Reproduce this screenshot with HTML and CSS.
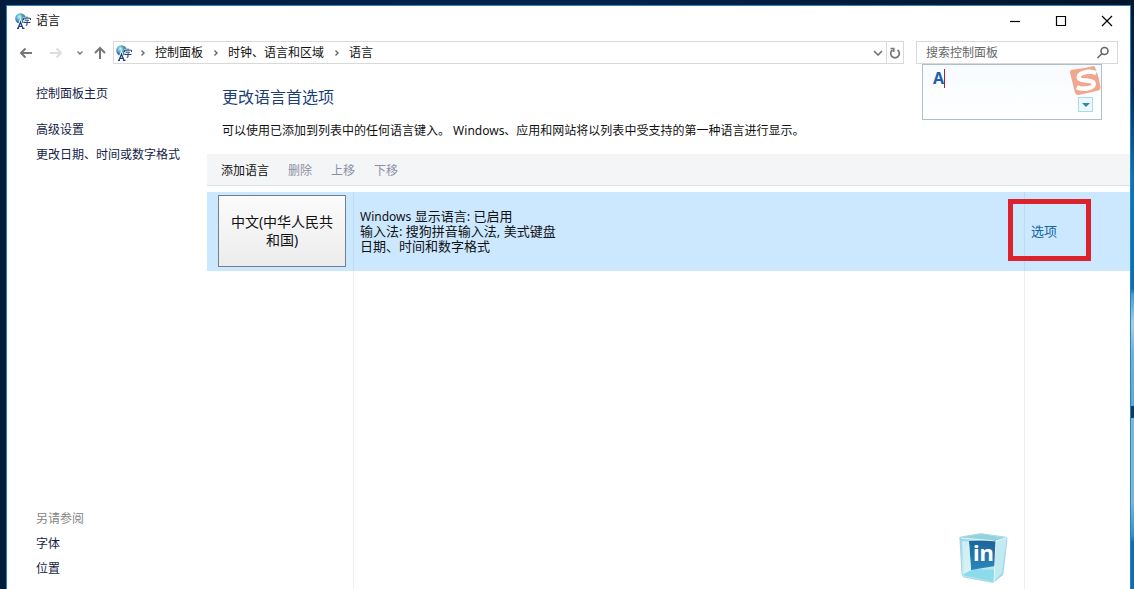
FILE: index.html
```html
<!DOCTYPE html>
<html lang="zh-CN">
<head>
<meta charset="utf-8">
<title>语言</title>
<link rel="stylesheet" href="styles.css">
</head>
<body>
<svg class="defs" aria-hidden="true">
  <defs>
    <radialGradient id="globe" cx="40%" cy="35%" r="65%">
      <stop offset="0" stop-color="#d4f5f6"/><stop offset=".45" stop-color="#58b0cf"/><stop offset="1" stop-color="#1d5188"/>
    </radialGradient>
    <symbol id="lang" viewBox="0 0 16 16">
      <circle cx="5.500" cy="5.500" r="5.300" fill="url(#globe)"/>
      <path d="M6 1Q9 1 10.500 4L8 4.500Z" fill="#4d9a72" opacity=".7"/>
      <path d="M8 4h8v7H8z" fill="#fff" opacity=".7"/>
      <path d="M12 3.500v1.500M8.500 7V5.200h7V7M10 7.200h3.500L12 8.700v3.500h-1.300M8.500 9.500h7" fill="none" stroke="#203f7b"/>
      <path d="M3 15.500L5.500 9l2.500 6.500" fill="none" stroke="#fff" stroke-width="3"/>
      <path d="M3 15.500L5.500 9l2.500 6.500M4 13.300h3M2 15.400h2M7 15.400h2.500" fill="none" stroke="#1e4384" stroke-width="1.300"/>
    </symbol>
    <symbol id="chev" viewBox="0 0 6 8"><path d="M1.500 1.500L4 4 1.500 6.500" fill="none" stroke="#666" stroke-width="1.400"/></symbol>
  </defs>
</svg>
<div class="window">
  <header class="titlebar">
    <svg class="app-icon"><use href="#lang"/></svg>
    <span class="title">语言</span>
    <button class="caption" aria-label="最小化"><svg viewBox="0 0 12 12"><path d="M1 6.500h10"/></svg></button>
    <button class="caption" aria-label="最大化"><svg viewBox="0 0 12 12"><path d="M1.500 1.500h9v9h-9z"/></svg></button>
    <button class="caption" aria-label="关闭"><svg viewBox="0 0 12 12"><path d="M1 1l10 10M11 1L1 11"/></svg></button>
  </header>
  <nav class="navbar">
    <button class="nav-btn back" aria-label="后退"><svg viewBox="0 0 14 14"><path d="M13 7H2M6.500 2.500L2 7l4.500 4.500"/></svg></button>
    <button class="nav-btn forward" aria-label="前进"><svg viewBox="0 0 14 14"><path d="M1 7h11M7.500 2.500L12 7l-4.500 4.500"/></svg></button>
    <button class="nav-btn recent" aria-label="最近位置"><svg viewBox="0 0 8 8"><path d="M1.500 2.500L4 5l2.500-2.500"/></svg></button>
    <button class="nav-btn up" aria-label="上移一级"><svg viewBox="0 0 14 14"><path d="M7 13V2M2 7l5-5 5 5"/></svg></button>
    <div class="address">
      <svg class="addr-icon"><use href="#lang"/></svg>
      <svg class="chev"><use href="#chev"/></svg>
      <a href="#">控制面板</a>
      <svg class="chev"><use href="#chev"/></svg>
      <a href="#">时钟、语言和区域</a>
      <svg class="chev"><use href="#chev"/></svg>
      <a href="#">语言</a>
      <button class="addr-btn drop" aria-label="历史记录"><svg viewBox="0 0 12 12"><path d="M2 4l4 4 4-4"/></svg></button>
      <button class="addr-btn refresh" aria-label="刷新"><svg viewBox="0 0 12 12"><path d="M3.500 3A4.300 4.300 0 1 0 8.500 3"/><path d="M1.500 1.500h3.200v3.500"/></svg></button>
    </div>
    <div class="search">
      <input type="text" placeholder="搜索控制面板" aria-label="搜索控制面板">
      <svg class="glass" viewBox="0 0 14 14"><circle cx="8.500" cy="5" r="3.500"/><path d="M6 7.500L1.500 12"/></svg>
      <div class="ime">
        <span class="typed">A</span>
        <svg class="sogou" viewBox="0 0 32 32">
          <path d="M2 5Q14 4 24 1q2 0 2.500 3 4 10 5 19 0 3-3 3.500L9 31q-3 0-4-3Q2 16 0 8 0 5 2 5z" fill="#f1a78e"/>
          <path d="M27 8.500C20 5 8.500 8 9 13c.500 4.500 15 1.500 15.500 6 .500 5-11 7-17.500 4" fill="none" stroke="#fff" stroke-width="4.500"/>
        </svg>
        <button class="ime-menu" aria-label="输入法菜单"><svg viewBox="0 0 8 4"><path d="M0 0h8L4 4z"/></svg></button>
      </div>
    </div>
  </nav>
  <div class="content">
    <aside class="sidebar">
      <a class="home" href="#">控制面板主页</a>
      <a href="#">高级设置</a>
      <a href="#">更改日期、时间或数字格式</a>
      <div class="see-also">
        <span class="muted">另请参阅</span>
        <a href="#">字体</a>
        <a href="#">位置</a>
      </div>
    </aside>
    <main class="main">
      <h1>更改语言首选项</h1>
      <p class="desc">可以使用已添加到列表中的任何语言键入。 Windows、应用和网站将以列表中受支持的第一种语言进行显示。</p>
      <div class="toolbar">
        <button>添加语言</button>
        <button disabled>删除</button>
        <button disabled>上移</button>
        <button disabled>下移</button>
      </div>
      <div class="list">
        <div class="row">
          <div class="cell name"><button class="tile">中文(中华人民共和国)</button></div>
          <div class="cell info"><span class="latin">Windows</span> 显示语言: 已启用<br>输入法: 搜狗拼音输入法, 美式键盘<br>日期、时间和数字格式</div>
          <div class="cell options"><a href="#">选项</a><span class="highlight"></span></div>
        </div>
        <div class="row filler"><div class="cell name"></div><div class="cell info"></div><div class="cell options"></div></div>
      </div>
      <svg class="cube" viewBox="0 0 50 50">
        <defs>
          <linearGradient id="ice" x1="0" y1="0" x2="1" y2="1"><stop offset="0" stop-color="#8ed2e2"/><stop offset=".5" stop-color="#d7f2f7"/><stop offset="1" stop-color="#79cfe2"/></linearGradient>
          <linearGradient id="blue" x1="0" y1="0" x2="0" y2="1"><stop offset="0" stop-color="#1b6499"/><stop offset="1" stop-color="#2b86ba"/></linearGradient>
        </defs>
        <path d="M2 6Q1 4 3 4L21 1q2-.500 4 0l22 3q2 0 2 2l-4 34q0 2-2 3l-6 5q-2 2-4 1L6 44q-2-1-2-3z" fill="url(#ice)" stroke="#a4d6e2"/>
        <path d="M3 5l34 3 11-3L23 1z" fill="#93d2df"/>
        <path d="M38 8l10-3-4 35-8 8z" fill="#c3eaf1"/>
        <path d="M5 41l11-5 20 1v11L6 43z" fill="#8cdbea"/>
        <path d="M11 8l27-1-1 26-24 4z" fill="url(#blue)"/>
        <path d="M3 5l35 3-2 41M38 8l10-3" fill="none" stroke="#e3f6fa"/>
        <path d="M4 8l7 1 2 27-7 5z" fill="#d9f2f6" opacity=".8"/>
        <text x="15" y="28">in</text>
      </svg>
    </main>
  </div>
</div>
</body>
</html>
```
FILE: styles.css
```css
* { box-sizing: border-box; }
body {
  margin: 0;
  height: 100vh;
  padding: 5px 3px 0 6px;
  display: flex;
  font: 12px/16px "Noto Sans", "Noto Sans CJK SC", sans-serif;
  color: #111;
  background:
    linear-gradient(#02182f 0, #032a55 15%, #0b74b8 30%, #0a6fb4 49%, #3e9fd0 50%, #a9cfe6 55%, #6fb2d9 60%, #5ea8d3 69%, #083c66 69%, #083c66 71%, #7ab8db 71%, #7ab8db 85%, #2f90c8 91%, #0a6fb4 92%) right / 4px 100% no-repeat,
    linear-gradient(90deg, #021c3c, #03234c 50%, #021428);
}
a { color: inherit; text-decoration: none; }
button { font: inherit; color: inherit; border: 0; padding: 0; background: none; display: flex; align-items: center; justify-content: center; }
.defs { position: absolute; width: 0; height: 0; }
.window {
  flex: 1;
  display: flex;
  flex-direction: column;
  background: #fff;
  border: 1px solid #2a83ba;
  border-bottom: 0;
}
.titlebar { height: 30px; display: flex; align-items: center; padding-left: 8px; }
.app-icon, .addr-icon { width: 16px; height: 16px; flex: none; }
.title { flex: 1; padding-left: 5px; }
.caption { width: 46px; height: 28px; }
.caption svg { width: 12px; height: 12px; fill: none; stroke: #000; stroke-width: 1.2; }
.navbar { display: flex; align-items: center; padding: 5px 12px 0 12px; }
.nav-btn svg { width: 14px; height: 14px; fill: none; stroke: #777; stroke-width: 2; }
.forward { margin-left: 16px; }
.forward svg { stroke: #ddd; }
.recent { margin-left: 13px; }
.recent svg { width: 8px; height: 8px; stroke-width: 1.4; }
.up { margin: 0 6px 0 9px; }
.address {
  flex: 1;
  height: 23px;
  display: flex;
  align-items: center;
  border: 1px solid #d9d9d9;
  padding-left: 2px;
}
.chev { width: 6px; height: 8px; margin: 0 9px 0 10px; flex: none; }
.addr-icon + .chev { margin-left: 8px; }
.addr-btn { align-self: stretch; width: 17px; }
.addr-btn svg { width: 12px; height: 12px; fill: none; stroke: #777; stroke-width: 1.7; }
.drop { margin-left: auto; }
.refresh { border-left: 1px solid #d9d9d9; }
.search {
  position: relative;
  width: 202px;
  height: 23px;
  margin-left: 12px;
  display: flex;
  align-items: center;
  border: 1px solid #d9d9d9;
  padding: 0 7px 0 9px;
}
.search input { flex: 1; min-width: 0; border: 0; outline: 0; padding: 0; font: inherit; background: none; }
.search input::placeholder { color: #666; opacity: 1; }
.glass { width: 14px; height: 14px; fill: none; stroke: #666; stroke-width: 1.6; }
.ime {
  position: absolute;
  left: 5px;
  top: 22px;
  width: 180px;
  height: 56px;
  border: 1px solid #aebfca;
  background: linear-gradient(#f7fbfe, #fff);
}
.typed {
  position: absolute;
  left: 10px;
  top: 4px;
  font: bold 16px/19px "Noto Sans", sans-serif;
  color: #1f5fa8;
  border-right: 1px solid #b3202c;
}
.sogou { position: absolute; right: 0; top: 0; width: 31px; height: 31px; }
.ime-menu { position: absolute; right: 8px; top: 32px; width: 15px; height: 15px; border: 1px solid #a9dbe8; background: #ecf8fc; }
.ime-menu svg { width: 8px; height: 4px; fill: #318aa3; }
.content { flex: 1; display: flex; min-height: 0; }
.sidebar {
  width: 200px;
  padding: 22px 0 12px 29px;
  display: flex;
  flex-direction: column;
  gap: 9px;
  color: #151c48;
}
.home { margin-bottom: 11px; }
.see-also { margin-top: auto; display: flex; flex-direction: column; gap: 9px; }
.muted { color: #858585; }
.main { flex: 1; min-width: 0; display: flex; flex-direction: column; position: relative; }
h1 { margin: 22px 15px 0; font-weight: 400; font-size: 16px; line-height: 22px; color: #1c3f78; }
.desc { margin: 15px 15px 15px; }
.toolbar {
  height: 32px;
  display: flex;
  align-items: center;
  gap: 19px;
  padding: 2px 14px 0;
  background: #f4f5f7;
  border-bottom: 1px solid #dfe3e8;
}
.toolbar button:disabled { color: #8c8fa3; }
.list { flex: 1; margin-top: 6px; display: flex; flex-direction: column; }
.row { display: flex; height: 79px; background: #cce8ff; }
.filler { flex: 1; height: auto; background: none; }
.cell { display: flex; align-items: center; padding-bottom: 2px; }
.name { width: 147px; padding-left: 11px; border-right: 1px solid rgba(110, 150, 185, .15); }
.tile {
  width: 128px;
  height: 72px;
  padding: 0 8px;
  font-size: 14px;
  line-height: 18px;
  border: 1px solid #767f88;
  background: linear-gradient(#fbfbfb, #ececec);
}
.info { flex: 1; display: block; align-self: stretch; padding: 17px 6px; font-size: 13px; line-height: 15px; border-right: 1px solid rgba(110, 150, 185, .15); }
.latin { font-size: 12px; }
.options { position: relative; width: 105px; padding-left: 6px; font-size: 13px; color: #1563a5; }
.highlight { position: absolute; left: -17px; top: 7px; width: 83px; height: 62px; border: 5px solid #dc222c; }
.cube { position: absolute; right: 122px; bottom: 6px; width: 50px; height: 50px; }
.cube text { font: bold 22px "Noto Sans", sans-serif; fill: #fff; }
```
